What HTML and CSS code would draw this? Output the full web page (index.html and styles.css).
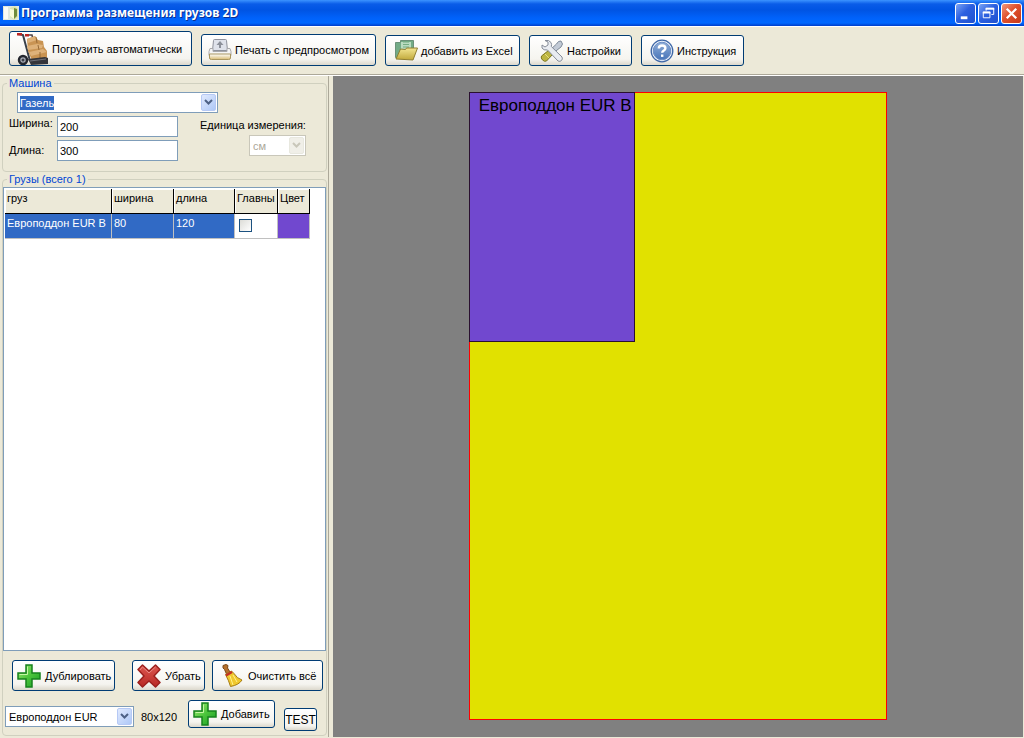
FILE: index.html
```html
<!DOCTYPE html>
<html lang="ru">
<head>
<meta charset="utf-8">
<title>Программа размещения грузов 2D</title>
<link rel="stylesheet" href="styles.css">
</head>
<body>
<svg class="defs" aria-hidden="true">
  <defs>
    <linearGradient id="green" x1="0" y1="0" x2="1" y2="1"><stop offset="0" stop-color="#a5ee74"/><stop offset=".5" stop-color="#4cc53c"/><stop offset="1" stop-color="#159a22"/></linearGradient>
    <linearGradient id="red" x1="0" y1="0" x2="0" y2="1"><stop offset="0" stop-color="#dc5850"/><stop offset="1" stop-color="#b82824"/></linearGradient>
    <linearGradient id="gold" x1="0" y1="0" x2="0" y2="1"><stop offset="0" stop-color="#f3e691"/><stop offset="1" stop-color="#c0a83a"/></linearGradient>
    <linearGradient id="tray" x1="0" y1="0" x2="0" y2="1"><stop offset="0" stop-color="#ffffff"/><stop offset="1" stop-color="#d9bc74"/></linearGradient>
    <linearGradient id="blue" x1="0" y1="0" x2="0" y2="1"><stop offset="0" stop-color="#91afd9"/><stop offset="1" stop-color="#4774b8"/></linearGradient>
    <symbol id="plus" viewBox="0 0 24 24"><path d="M9 1h6v8h8v6h-8v8H9v-8H1V9h8z" fill="url(#green)" stroke="#16811d" stroke-width="1.500"/><path d="M10.500 2.500v8H2.500" fill="none" stroke="#c5f7a4"/></symbol>
    <symbol id="chevron" viewBox="0 0 9 7"><path d="M1 1l3.500 3.500L8 1" fill="none" stroke="currentColor" stroke-width="2"/></symbol>
  </defs>
</svg>

<header class="titlebar">
  <svg class="app-icon" viewBox="0 0 16 16"><path d="M0 1h16v14H0z" fill="#dfe8de"/><path d="M1 2h4v12H1z" fill="#f9fbf5"/><path d="M7 3l5-2 3 3v8l-4 3-4-3z" fill="#dce4ac"/><path d="M11 3l3 1v7l-3 3z" fill="#718c3c"/><path d="M7 4l4 1v9l-4-3z" fill="#fafbd9"/></svg>
  <h1 class="title">Программа размещения грузов 2D</h1>
  <div class="window-controls">
    <button class="win-btn" aria-label="Свернуть"><svg viewBox="0 0 20 20"><path d="M5 13h7v3H5z" fill="#fff"/></svg></button>
    <button class="win-btn" aria-label="Восстановить"><svg viewBox="0 0 20 20" fill="none" stroke="#fff"><path d="M7.500 7V4.500h8v6.500H13"/><path d="M7 5h9" stroke-width="2"/><path d="M4.500 8.500h7v6h-7z"/><path d="M4 9h8" stroke-width="2"/></svg></button>
    <button class="win-btn win-close" aria-label="Закрыть"><svg viewBox="0 0 20 20"><path d="M5 5l10 10M15 5L5 15" stroke="#fff" stroke-width="2.400"/></svg></button>
  </div>
</header>

<nav class="toolbar">
  <button class="btn btn-load"><svg class="icon-load" viewBox="0 0 34 34">
    <path d="M3 2l5 1 7 26" fill="none" stroke="#39404a" stroke-width="2"/><path d="M11 3h6l1 5" fill="none" stroke="#4a4246" stroke-width="1.500"/><path d="M2 1h5v2.500H2zM10 2h4v2.500h-4z" fill="#bd2724"/>
    <path d="M12 7l8-3 3 4 5 1 1 6 3 4v10l-14 2-5-12z" fill="#c99453"/><path d="M12 7l8-3 2 4-9 3zM12 14l10-2 6 1-1 3-14 2zM14 20l14-3 4 3-16 4z" fill="#deb27a"/><path d="M21 5l1 6M23 13l1 5M25 20v8" stroke="#966a37" fill="none"/>
    <path d="M13 27l17-2 3 1v6l-17 1z" fill="#34353a"/><path d="M15 29l16-2" stroke="#70727a"/>
    <circle cx="8" cy="28" r="4" fill="#a9adb7" stroke="#23262d" stroke-width="2.500"/><circle cx="8" cy="28" r="1.500" fill="#3c4048"/></svg><span>Погрузить автоматически</span></button>
  <button class="btn btn-print"><svg class="icon" viewBox="0 0 24 24"><path d="M5.500 2.500q0-1 1-1h11q1 0 1 1l1 10h-15z" fill="#dfe2ea" stroke="#8f929c"/><path d="M12 3l3.500 4H13v3h-2V7H8.500z" fill="#8c9099"/><path d="M2 10.500h3v3h14v-3h3l1 3v4H1v-4z" fill="#f5f5f6" stroke="#a9a9ac"/><path d="M1.500 16h21v4q0 1.500-2 1.500h-17q-2 0-2-1.500z" fill="url(#tray)" stroke="#aa965f"/></svg><span>Печать с предпросмотром</span></button>
  <button class="btn btn-excel"><svg class="icon" viewBox="0 0 24 24"><path d="M1.500 3.500h5v-2h13v17h-18z" fill="#73ab86" stroke="#6b9179"/><path d="M7 3h10v9H7z" fill="#b9dcc0"/><path d="M9 3h6M9 5.500h6M9 8h6" stroke="#75ac82"/><path d="M2 20L6.500 10l5 .500 1-1.500H23.500l-4.500 12z" fill="url(#gold)" stroke="#907f30"/></svg><span>добавить из Excel</span></button>
  <button class="btn btn-settings"><svg class="icon" viewBox="0 0 24 24"><path d="M18.500 2.500l2.500-.500 1.500 3-1.500 3-9 7-3-3 7.500-7z" fill="#c2cad6" stroke="#7d8998"/><path d="M8.500 11.500l4 4-6 6.500q-2 1-4-1t-1-4z" fill="#bdb541" stroke="#7d7720"/><path d="M5 15l4 4" stroke="#e6e080"/><path d="M2 6l3 2 3-2V3L5 1.500q4-1 6 2 1 2 .300 4L22 18q1 2-.500 3.500t-3.500.500L7.500 11q-4 .500-5.500-2z" fill="#e9ecf1" stroke="#858c98"/></svg><span>Настройки</span></button>
  <button class="btn btn-help"><svg class="icon" viewBox="0 0 24 24"><circle cx="12" cy="12" r="10.800" fill="#f4f8ff" stroke="#3e67a6" stroke-width="1.300"/><circle cx="12" cy="12" r="8.800" fill="url(#blue)" stroke="#6b8ec5"/><path d="M8.800 9.500q0-3 3.300-3t3.300 2.700q0 1.600-1.700 2.400-1.500.800-1.500 2.200" fill="none" stroke="#fff" stroke-width="2.400"/><path d="M11 15.500h2.400v2.400H11z" fill="#fff"/></svg><span>Инструкция</span></button>
</nav>

<main class="workspace">
  <aside class="side">
    <fieldset class="group vehicle">
      <legend>Машина</legend>
      <div class="combo combo-vehicle">
        <input class="combo-input" id="vehicle" value="Газель" aria-label="Машина">
        <button class="combo-arrow" aria-label="Открыть список"><svg class="chevron"><use href="#chevron"/></svg></button>
      </div>
      <div class="vehicle-body">
        <div class="dims">
          <label for="width">Ширина:</label><input class="field" id="width" value="200">
          <label for="length" class="label-low">Длина:</label><input class="field" id="length" value="300">
        </div>
        <div class="unit">
          <label for="unit">Единица измерения:</label>
          <div class="combo combo-unit"><select class="combo-input" id="unit" disabled><option>см</option></select><span class="combo-arrow"><svg class="chevron"><use href="#chevron"/></svg></span></div>
        </div>
      </div>
    </fieldset>

    <fieldset class="group cargo">
      <legend>Грузы (всего 1)</legend>
      <div class="grid-box">
        <table class="grid">
          <colgroup><col class="c-name"><col class="c-width"><col class="c-length"><col class="c-main"><col class="c-color"></colgroup>
          <thead><tr><th>груз</th><th>ширина</th><th>длина</th><th>Главны</th><th>Цвет</th></tr></thead>
          <tbody><tr><td>Европоддон EUR B</td><td>80</td><td>120</td><td class="check-cell"><input class="check" type="checkbox" aria-label="Главный"></td><td class="color-cell"></td></tr></tbody>
        </table>
      </div>
      <div class="actions">
        <button class="btn btn-copy"><svg class="icon"><use href="#plus"/></svg><span>Дублировать</span></button>
        <button class="btn btn-remove"><svg class="icon" viewBox="0 0 24 24"><path d="M5.500 1l6.500 6L18.500 1 23 5.500 17 12l6 6.500-4.500 4.500L12 17l-6.500 6L1 18.500 7 12 1 5.500z" fill="url(#red)" stroke="#9c211e" stroke-width="1.500" stroke-linejoin="round"/><path d="M3 6l2.500-3 6.500 6 6.500-6" fill="none" stroke="#ec8a84"/></svg><span>Убрать</span></button>
        <button class="btn btn-clear"><svg class="icon" viewBox="0 0 24 24"><path d="M3 1.500l3-1 2 1-.500 2.500 2.500 4-3.500 2L4.500 5.500 3 4z" fill="#b5722e" stroke="#7c4918"/><path d="M5.500 10.500l6-3.500L14 9.500q3 5 8 6.500-3 5-11.500 6.500Q9 17 5.500 10.500z" fill="#f0c82e" stroke="#a67c12"/><path d="M5.500 10.500l6-3.500 1 2-6 3.500z" fill="#c32e26"/><path d="M10 12l3 9M13 11l4 7" stroke="#fff08a"/></svg><span>Очистить всё</span></button>
      </div>
      <div class="adder">
        <div class="combo combo-type"><select class="combo-input" id="type" aria-label="Тип груза"><option>Европоддон EUR</option></select><span class="combo-arrow"><svg class="chevron"><use href="#chevron"/></svg></span></div>
        <label class="size" for="type">80x120</label>
        <button class="btn btn-add"><svg class="icon"><use href="#plus"/></svg><span>Добавить</span></button>
        <button class="btn btn-test">TEST</button>
      </div>
    </fieldset>
  </aside>
  <section class="canvas" aria-label="Схема загрузки">
    <div class="truck"><div class="pallet">Европоддон EUR B</div></div>
  </section>
</main>
<script src="app.js"></script>
</body>
</html>
```
FILE: styles.css
```css
* { box-sizing: border-box; }
body {
  margin: 0;
  height: 100vh;
  display: flex;
  flex-direction: column;
  background: #ece9d8;
  color: #000;
  font: 11px/14px "Liberation Sans", Arial, sans-serif;
}
button, input, select { font: inherit; color: inherit; }
.defs { position: absolute; width: 0; height: 0; }

.titlebar {
  flex: none;
  display: flex;
  align-items: center;
  height: 26px;
  padding: 0 2px 0 3px;
  background: linear-gradient(#3c93ff 0, #0a5ce8 4px, #0054e3 10px, #0062fb 18px, #0068ff 23px, #003dc9 26px);
}
.app-icon { width: 16px; height: 16px; }
.title {
  flex: 1;
  margin: 0 0 0 2px;
  color: #fff;
  font: bold 12px/16px "Noto Sans", sans-serif;
  text-shadow: 1px 1px #0b2f91;
}
.window-controls { display: flex; gap: 2px; }
.win-btn {
  width: 21px;
  height: 21px;
  padding: 0;
  border: 1px solid #fff;
  border-radius: 3px;
  background: linear-gradient(135deg, #7ba4f5, #2c60e0 45%, #1f51cf);
}
.win-btn svg { display: block; width: 19px; height: 19px; }
.win-close { background: linear-gradient(135deg, #f0987c, #e0512d 45%, #c5391a); }

.toolbar {
  flex: none;
  display: flex;
  align-items: flex-end;
  gap: 9px;
  height: 50px;
  padding: 0 9px 9px;
  border-top: 1px solid #fff;
  border-bottom: 1px solid #fff;
  box-shadow: inset 0 -1px #aca899;
}
.btn {
  display: flex;
  flex: none;
  align-items: center;
  gap: 5px;
  padding: 0 2px 0 4px;
  border: 1px solid #003c74;
  border-radius: 3px;
  background: linear-gradient(#fff, #f5f4ef 80%, #dcd8cc);
  white-space: nowrap;
}
.icon { flex: none; width: 24px; height: 24px; }
.icon-load { flex: none; width: 34px; height: 34px; }
.toolbar .btn { height: 31px; padding-left: 8px; }
.toolbar .btn-load { width: 183px; height: 35px; padding-left: 5px; gap: 3px; }
.toolbar .btn-print { width: 175px; height: 32px; padding-left: 6px; gap: 3px; }
.btn-excel { width: 135px; gap: 3px; }
.toolbar .btn-settings { width: 103px; padding-left: 10px; gap: 3px; }
.btn-help { width: 103px; gap: 3px; }

.workspace { flex: 1; display: flex; min-height: 0; padding: 0 1px 1px 0; }
.side {
  flex: none;
  display: flex;
  flex-direction: column;
  gap: 1px;
  width: 329px;
  padding: 1px 1px 1px 2px;
  border-right: 1px solid #aca899;
  margin-right: 4px;
}
.group {
  min-width: 0;
  margin: 0;
  padding: 0;
  border: 1px solid #d0d0bf;
  border-radius: 4px;
}
.group legend { margin-left: 4px; padding: 0 2px; color: #0046d5; line-height: 12px; }
.vehicle { height: 95px; padding-left: 6px; }
.vehicle legend { margin-left: -2px; }

.combo {
  display: flex;
  height: 21px;
  padding: 1px;
  border: 1px solid #7f9db9;
  background: #fff;
}
.combo-input {
  flex: 1;
  min-width: 0;
  padding: 0 2px;
  border: 0;
  outline: 0;
  background: none;
  appearance: none;
}
.combo-vehicle .combo-input { padding: 0 1px; }
.combo-input::selection { background: #316ac5; color: #fff; }
.combo-arrow {
  flex: none;
  display: grid;
  place-items: center;
  width: 15px;
  padding: 0;
  border: 1px solid #b6c9f5;
  border-radius: 2px;
  background: linear-gradient(135deg, #e1eafe, #aec8f7);
  color: #4d6185;
  pointer-events: none;
}
.chevron { width: 9px; height: 7px; }
.combo-vehicle { width: 201px; margin: 3px 0 0 8px; }
.vehicle-body { display: flex; gap: 22px; margin-top: 3px; }
.dims {
  display: grid;
  grid-template-columns: 48px 121px;
  gap: 3px 0;
}
.dims .label-low { padding-top: 3px; }
.field {
  width: 121px;
  height: 21px;
  padding: 0 2px;
  border: 1px solid #7f9db9;
  background: #fff;
}
.unit { display: flex; flex-direction: column; gap: 3px; padding-top: 2px; }
.combo-unit { align-self: flex-end; width: 57px; border-color: #c9c7ba; color: #aca899; }
.combo-unit .combo-input { color: #aca899; opacity: 1; }
.combo-unit .combo-arrow { border-color: #e8e8df; background: #f0efe8; color: #c9c7ba; }

.cargo { flex: 1; min-height: 0; display: flex; flex-direction: column; }
.grid-box {
  flex: 1;
  margin-top: 2px;
  padding: 1px;
  border: 1px solid #7f9db9;
  background: #fff;
}
.grid { width: 305px; table-layout: fixed; border-collapse: separate; border-spacing: 0; }
.c-name { width: 107px; }
.c-width { width: 62px; }
.c-length { width: 61px; }
.c-main { width: 43px; }
.c-color { width: 32px; }
.grid th, .grid td {
  height: 25px;
  padding: 2px;
  overflow: hidden;
  vertical-align: top;
  text-align: left;
  font-weight: normal;
  white-space: nowrap;
}
.grid th {
  border-right: 1px solid #000;
  border-bottom: 1px solid #000;
  background: #ece9d8;
  box-shadow: inset 1px 1px #fff;
}
.grid td {
  border-right: 1px solid #c0c0c0;
  border-bottom: 1px solid #c0c0c0;
  background: #316ac5;
  color: #fff;
}
.grid .check-cell { padding: 5px 4px; background: #fff; }
.grid .color-cell { background: #7148cf; }
.check {
  display: block;
  appearance: none;
  width: 13px;
  height: 13px;
  margin: 0;
  border: 1px solid #1c5180;
  background: linear-gradient(135deg, #dcdcd7, #fff);
}
.actions { display: flex; padding: 9px 0 0 9px; }
.actions .btn { height: 31px; gap: 4px; }
.btn-copy { width: 103px; margin-right: 17px; }
.btn-remove { width: 73px; margin-right: 7px; }
.actions .btn-clear { width: 111px; padding-left: 7px; }
.adder { display: flex; align-items: flex-start; padding: 9px 0 4px 2px; }
.combo-type { width: 129px; margin-top: 6px; }
.size { width: 54px; padding: 10px 0 0 7px; }
.btn-add { width: 87px; height: 28px; margin-right: 9px; gap: 4px; }
.btn-test {
  justify-content: center;
  width: 33px;
  height: 23px;
  margin-top: 8px;
  padding: 0;
  font-size: 12px;
}

.canvas {
  flex: 1;
  display: flex;
  justify-content: center;
  padding: 16px 0 17px;
  background: #808080;
}
.truck { height: 100%; aspect-ratio: 2 / 3; border: 1px solid #f00; background: #e1e100; }
.pallet {
  width: 40%;
  height: 40%;
  margin: -1px 0 0 -1px;
  padding: 3px 0 0 9px;
  border: 1px solid #2a1030;
  background: #7148cf;
  font-size: 17px;
  line-height: 20px;
  white-space: nowrap;
}
```
FILE: app.js
```js
const vehicle = document.getElementById("vehicle");
vehicle.focus();
vehicle.select();
```
